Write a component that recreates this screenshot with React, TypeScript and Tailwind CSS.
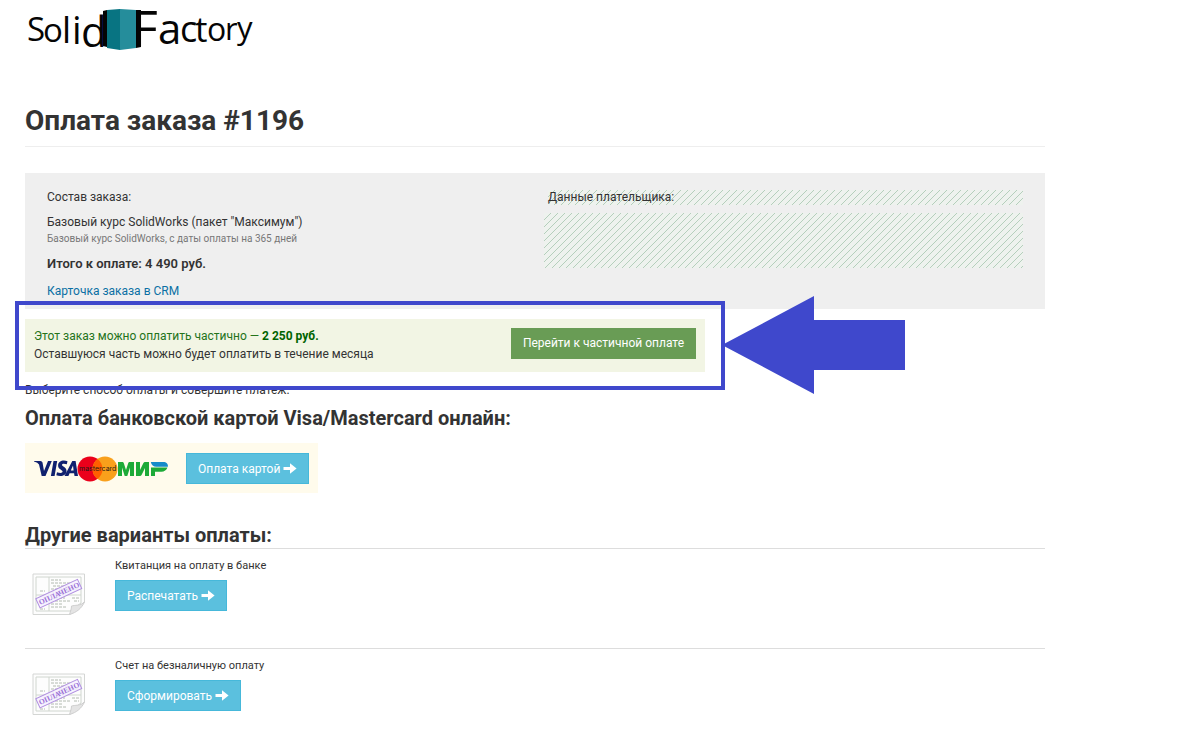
import type { ReactNode } from "react";

function ArrowIcon() {
  return (
    <svg width="14" height="14" viewBox="0 0 14 14" aria-hidden="true" className="shrink-0">
      <path d="M0.500 4.900H7V1.200L13.600 6.500 7 11.800V8.100H0.500z" fill="#fff" />
    </svg>
  );
}

function Logo() {
  return (
    <svg width="240" height="56" viewBox="0 0 240 56" role="img" aria-label="SolidFactory" className="block">
      <path d="M78 11l4-1v37l-4-1zM111 10h5v37l-5 1z" fill="#050505" />
      <path d="M82 10l13-1v41l-13-2z" fill="#087482" />
      <path d="M95 9l16 1v38l-16 2z" fill="#258d9b" />
      <g fontFamily="'Open Sans', sans-serif" fill="#050505">
        <text x="2" y="41" fontSize="33">S</text>
        <text x="18" y="42" fontSize="33">o</text>
        <text x="37" y="43" fontSize="36">l</text>
        <text x="47" y="44" fontSize="38">i</text>
        <text x="56" y="47" fontSize="42">d</text>
        <text x="107" y="46" fontSize="50">F</text>
        <text x="133" y="44" fontSize="42">a</text>
        <text x="155" y="42" fontSize="36">c</text>
        <text x="170" y="42" fontSize="35">t</text>
        <text x="182" y="41" fontSize="32">o</text>
        <text x="200" y="40" fontSize="31">r</text>
        <text x="212" y="39" fontSize="31">y</text>
      </g>
    </svg>
  );
}

function CardLogos() {
  return (
    <svg width="136" height="28" viewBox="0 0 136 28" role="img" aria-label="Visa, Mastercard, МИР" className="block">
      <path d="M0 6h6.500q1.500 0 2 1.600L10 16l4-10h3.800l-6.300 15H7.700L5 9.500Q4 7.500 0 6.600z" fill="#10216f" />
      <path
        d="M19.500 6h3.700l-2.600 15h-3.700zM33.500 6.300l-.7 3c-2.500-1-4.800-.8-4.800.6 0 1.600 4.500 2 4.500 5.800 0 5-5.500 6.400-10.200 4.600l.7-3.100c3 1.200 5.600 1 5.600-.6 0-1.900-4.500-2.200-4.500-5.900 0-4.900 5.300-6 9.400-4.400zM38.300 6h3.300L44 21h-3.500l-.4-2.700h-4.500L34.400 21h-3.900zM39 10.500l-2.200 5h2.800z"
        fill="#10216f"
      />
      <circle cx="56" cy="14" r="12.500" fill="#eb001b" />
      <circle cx="71" cy="14" r="12.500" fill="#f9a01b" />
      <path d="M63.500 4a12.500 12.500 0 0 1 0 20 12.500 12.500 0 0 1 0-20" fill="#ff5f00" />
      <text x="45" y="16" fontSize="7" fontFamily="Inter, sans-serif" fill="#271a14">mastercard</text>
      <path
        d="M84 21V7h4c1 0 1.600.5 1.900 1.400L92 15l2.100-6.600C94.400 7.500 95 7 96 7h4v14h-4v-8.500L93.300 21h-2.600L88 12.500V21zM102 21V7h4v8l3.300-6.800C109.700 7.400 110.300 7 111 7h4v14h-4v-8l-3.300 6.800c-.4.800-1 1.200-1.700 1.200zM117 12.500h16.500c-.9 2.500-3.200 4.300-6.100 4.300H121V21h-4z"
        fill="#1daa38"
      />
      <path d="M116.800 7h12.600c2.800 0 4.900 2 4.500 4.800h-11.700c-2.700 0-4.900-2-5.400-4.800" fill="#168bc9" />
    </svg>
  );
}

function ReceiptIcon() {
  return (
    <svg width="56" height="44" viewBox="0 0 56 44" aria-hidden="true" className="block">
      <path d="M1 1h51.500v28L38 41.500H1z" fill="#fdfdfd" stroke="#d4d6d4" />
      <path d="M4 4h45v26L38 38H4zM17 4v34M4 22h45" fill="none" stroke="#d0d6cf" />
      <path d="M19 7h10M19 10h20M21 13h16M19 16h28M19 19h18M19 25h14M19 28h20M19 31h12M19 34h16M40 25h8M42 28h5M8 18h5M8 36h5" stroke="#b2bab0" strokeDasharray="3 1" />
      <path d="M52.500 29c-4 4-10 3-13 4 0 3-1 5-2 8.500 7-2 12-6 15-12.500" fill="#e4e4e4" stroke="#cfcfcf" />
      <g transform="rotate(-25 27 20)">
        <rect x="3.500" y="15.500" width="46" height="10" fill="#f6f1ff" fillOpacity=".85" stroke="#b08fe0" />
        <text x="5" y="23" fontSize="7.500" fontWeight="700" fontFamily="'Liberation Serif', serif" fill="#9a6fd6">ОПЛАЧЕНО</text>
      </g>
    </svg>
  );
}

function ActionButton({ children }: { children: ReactNode }) {
  return (
    <button type="button" className="flex h-[31px] items-center gap-[3px] border border-[#46b8da] bg-[#5bc0de] px-[11px] text-xs text-white">
      {children}
      <ArrowIcon />
    </button>
  );
}

function PaymentOption({ title, action }: { title: string; action: string }) {
  return (
    <li className="flex h-[100px] border-t border-[#ddd] pt-2">
      <div className="w-[90px] shrink-0 pt-4 pl-[7px]">
        <ReceiptIcon />
      </div>
      <div className="flex flex-col items-start gap-[5px]">
        <h3 className="text-[11px] leading-[18px]">{title}</h3>
        <ActionButton>{action}</ActionButton>
      </div>
    </li>
  );
}

export default function App() {
  return (
    <div className="min-h-screen bg-white px-[25px] font-['Roboto','Liberation_Sans',sans-serif] text-xs text-[#333]">
      <div className="max-w-[1020px]">
        <header className="h-[101px]">
          <Logo />
        </header>
        <main>
          <h1 className="border-b border-[#eee] pb-[5px] text-[28px] leading-10 font-bold">Оплата заказа #1196</h1>
          <section className="mt-[26px] grid h-[136px] grid-cols-2 bg-[#efefef] px-[22px] pt-[15px]">
            <div className="leading-[18px]">
              <p>Состав заказа:</p>
              <p className="mt-[7px]">Базовый курс SolidWorks (пакет "Максимум")</p>
              <p className="text-[10px] leading-4 text-[#777]">Базовый курс SolidWorks, с даты оплаты на 365 дней</p>
              <p className="mt-2 text-[13px] leading-[18px] font-semibold">Итого к оплате: 4 490 руб.</p>
              <a href="#crm" className="mt-[9px] block text-[#0b6fa4]">Карточка заказа в CRM</a>
            </div>
            <div className="pt-[2px] pl-[9px]">
              <p className="ml-1 bg-[#eef2ee] bg-[linear-gradient(135deg,transparent_44%,#b5cfbc_46%_54%,transparent_56%)] bg-size-[7px_7px] leading-[15px]">Данные плательщика:</p>
              <div className="mt-2 h-[55px] bg-[#eef2ee] bg-[linear-gradient(135deg,transparent_44%,#b5cfbc_46%_54%,transparent_56%)] bg-size-[7px_7px]" />
            </div>
          </section>
          <section className="relative mt-[10px] flex max-w-[680px] items-center justify-between bg-[#f2f5e4] px-[9px] pt-2 pb-[9px]">
            <p className="leading-[18px]">
              <span className="text-[#24731a]">Этот заказ можно оплатить частично — <strong className="text-[#006400]">2 250 руб.</strong></span>
              <br />
              Оставшуюся часть можно будет оплатить в течение месяца
            </p>
            <button type="button" className="mb-1 h-[31px] bg-[#699c55] px-3 text-white">Перейти к частичной оплате</button>
            <div className="absolute -top-[18px] -right-5 -bottom-[18px] -left-[10px] border-4 border-[#3f48cc]" />
            <svg width="184" height="98" viewBox="0 0 184 98" aria-hidden="true" className="absolute -top-[23px] left-full ml-4">
              <path d="M1 49L93 0v24h91v50H93v24z" fill="#3f48cc" />
            </svg>
          </section>
          <p className="mt-[9px] leading-[18px]">Выберите способ оплаты и совершите платеж.</p>
          <h2 className="mt-[5px] text-xl leading-7 font-bold">Оплата банковской картой Visa/Mastercard онлайн:</h2>
          <div className="mt-[11px] flex h-[50px] w-fit items-center gap-4 bg-[#fffbec] px-[9px] pt-px">
            <CardLogos />
            <ActionButton>Оплата картой</ActionButton>
          </div>
          <h2 className="mt-[30px] text-xl leading-[25px] font-bold">Другие варианты оплаты:</h2>
          <ul>
            <PaymentOption title="Квитанция на оплату в банке" action="Распечатать" />
            <PaymentOption title="Счет на безналичную оплату" action="Сформировать" />
          </ul>
        </main>
      </div>
    </div>
  );
}
